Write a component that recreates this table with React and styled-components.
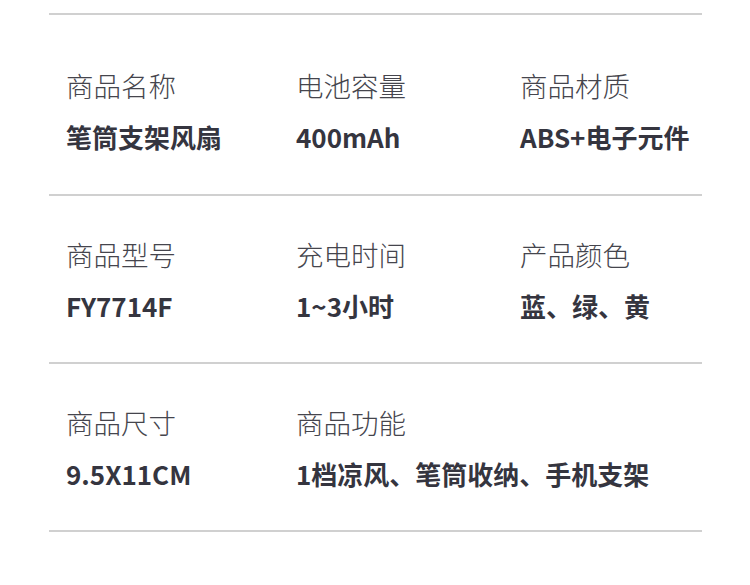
import React from 'react';
import styled, { createGlobalStyle } from 'styled-components';

const GlobalStyle = createGlobalStyle`
  html, body {
    margin: 0;
    padding: 0;
    background: #ffffff;
  }
  body {
    font-family: "Noto Sans CJK SC", "Noto Sans", sans-serif;
  }
`;

const Page = styled.div`
  width: 750px;
  height: 585px;
  padding-top: 13px;
  box-sizing: border-box;
  background: #fff;
`;

const Table = styled.div`
  margin: 0 48px 0 49px;
  border-bottom: 2px solid #d0d0d0;
`;

const Row = styled.div`
  display: grid;
  grid-template-columns: 230px 224px 1fr;
  padding: ${props => (props.first ? '54px 0 41px' : '42px 0 40px')};
  padding-left: 17px;
  border-top: 2px solid #d0d0d0;
`;

const Cell = styled.div`
  display: flex;
  flex-direction: column;
  gap: 20px;
  white-space: nowrap;
`;

const Label = styled.div`
  font-size: 27.5px;
  line-height: 32px;
  font-weight: 300;
  color: #45454d;
`;

const Value = styled.div`
  font-size: 26px;
  line-height: 32px;
  font-weight: 700;
  color: #35353f;
`;

const rows = [
  [
    ['商品名称', '笔筒支架风扇'],
    ['电池容量', '400mAh'],
    ['商品材质', 'ABS+电子元件'],
  ],
  [
    ['商品型号', 'FY7714F'],
    ['充电时间', '1~3小时'],
    ['产品颜色', '蓝、绿、黄'],
  ],
  [
    ['商品尺寸', '9.5X11CM'],
    ['商品功能', '1档凉风、笔筒收纳、手机支架'],
  ],
];

const App = () => (
  <>
    <GlobalStyle />
    <Page>
      <Table>
        {rows.map((row, i) => (
          <Row key={i} first={i === 0}>
            {row.map(([label, value]) => (
              <Cell key={label}>
                <Label>{label}</Label>
                <Value>{value}</Value>
              </Cell>
            ))}
          </Row>
        ))}
      </Table>
    </Page>
  </>
);

export default App;
